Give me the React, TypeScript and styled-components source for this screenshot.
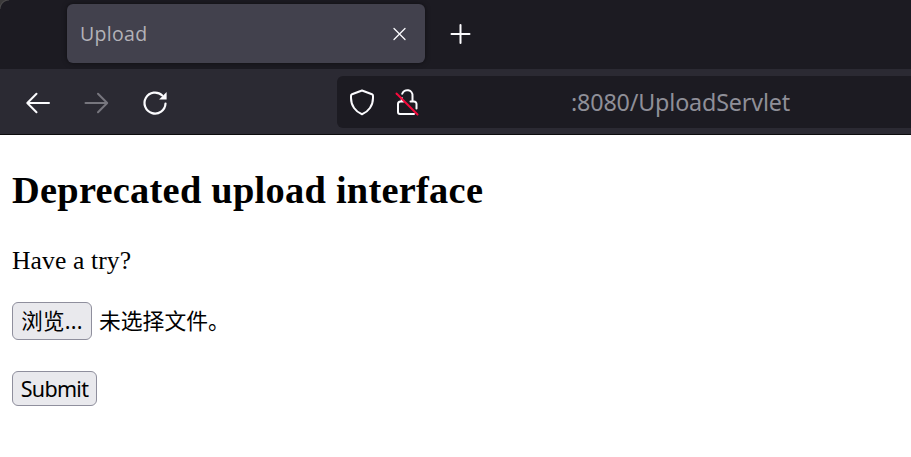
import React from "react";
import styled, { createGlobalStyle } from "styled-components";

const GlobalStyle = createGlobalStyle`
  html, body { margin: 0; padding: 0; background: #fff; }
  body { overflow: hidden; }
  * { box-sizing: border-box; }
`;

const Window = styled.div`
  width: 911px;
  height: 457px;
  display: flex;
  flex-direction: column;
  background: #fff;
`;

const TabStrip = styled.div`
  height: 69px;
  flex: none;
  display: flex;
  padding: 4px 0 0 67px;
  background: radial-gradient(circle at 9px 9px, #1c1b22 8px, #4c4b4c 9px, #3a393a 10px) 0 0 / 9px 9px no-repeat, #1c1b22;
`;

const Tab = styled.div`
  width: 358px;
  height: 59px;
  display: flex;
  align-items: center;
  justify-content: space-between;
  padding: 0 17px 0 13px;
  border-radius: 6px;
  background: #42414d;
  box-shadow: 0 0 5px rgba(0, 0, 0, 0.5);
`;

const TabTitle = styled.span`
  font: 19.5px/28px "Open Sans", "Noto Sans", sans-serif;
  letter-spacing: 0.3px;
  color: #b3b2b8;
  padding-top: 1px;
`;

const IconButton = styled.button<{ $size: number; $dim?: boolean }>`
  display: flex;
  flex: none;
  width: ${(p) => p.$size}px;
  height: ${(p) => p.$size}px;
  padding: 0;
  border: 0;
  background: none;
  color: ${(p) => (p.$dim ? "#77767e" : "#fbfbfe")};
`;

const NewTabSlot = styled.div`
  padding: 18px 0 0 23px;
`;

const Icon = styled.svg<{ $stroke?: number }>`
  width: 100%;
  height: 100%;
  fill: none;
  stroke: currentColor;
  stroke-width: ${(p) => p.$stroke ?? 2};
  stroke-linecap: round;
  stroke-linejoin: round;
`;

const Toolbar = styled.div`
  height: 66px;
  flex: none;
  display: flex;
  align-items: flex-start;
  padding-top: 7px;
  background: #2b2a33;
  border-bottom: 1px solid #0c0c0d;
`;

const Navigation = styled.div`
  width: 337px;
  height: 52px;
  display: flex;
  align-items: center;
  gap: 31px;
  padding: 1px 0 0 24px;
`;

const AddressBar = styled.div`
  flex: 1;
  height: 52px;
  display: flex;
  align-items: center;
  padding-left: 11px;
  border-radius: 6px 0 0 6px;
  background: #1c1b22;
`;

const SiteIcons = styled.div`
  width: 223px;
  display: flex;
  gap: 17px;
`;

const Address = styled.span`
  font: 23.3px/32px "Noto Sans", "Open Sans", sans-serif;
  letter-spacing: -0.16px;
  color: #8f8f98;
`;

const Page = styled.main`
  display: flex;
  flex-direction: column;
  align-items: flex-start;
  padding: 33px 12px 0;
  color: #000;
`;

const Heading = styled.h2`
  margin: 0;
  font: bold 38.4px/44px "Liberation Serif", "Times New Roman", serif;
  letter-spacing: 0.26px;
`;

const Paragraph = styled.p`
  margin: 34px 0 0;
  font: 25.6px/30px "Liberation Serif", "Times New Roman", serif;
  letter-spacing: 0.12px;
`;

const FileField = styled.div`
  display: flex;
  align-items: center;
  gap: 7px;
  margin-top: 26px;
`;

const FormButton = styled.button<{ $width: number; $height: number; $tracking: number }>`
  display: flex;
  align-items: center;
  justify-content: center;
  width: ${(p) => p.$width}px;
  height: ${(p) => p.$height}px;
  padding: 0;
  border: 1px solid #8f8f9d;
  border-radius: 6px;
  background: #e9e9ed;
  color: #000;
  font: 21.5px/30px "Noto Sans", "Noto Sans CJK SC", sans-serif;
  letter-spacing: ${(p) => p.$tracking}px;
  white-space: nowrap;
`;

const FileStatus = styled.span`
  font: 21.8px/30px "Noto Sans CJK SC", sans-serif;
  padding-bottom: 2px;
`;

const SubmitRow = styled.div`
  margin-top: 31px;
`;

export default function App() {
  return (
    <Window>
      <GlobalStyle />
      <TabStrip>
        <Tab>
          <TabTitle>Upload</TabTitle>
          <IconButton $size={17} aria-label="Close tab">
            <Icon viewBox="0 0 17 17" $stroke={1.3}>
              <path d="M3 3.500l11 11M14 3.500L3 14.500" />
            </Icon>
          </IconButton>
        </Tab>
        <NewTabSlot>
          <IconButton $size={24} aria-label="New tab">
            <Icon viewBox="0 0 24 24">
              <path d="M12.500 3v18M3.500 12h18" />
            </Icon>
          </IconButton>
        </NewTabSlot>
      </TabStrip>
      <Toolbar>
        <Navigation>
          <IconButton $size={28} aria-label="Back">
            <Icon viewBox="0 0 28 28">
              <path d="M25 14H3.500M12.500 4.800L3.300 14l9.200 9.200" />
            </Icon>
          </IconButton>
          <IconButton $size={28} $dim aria-label="Forward">
            <Icon viewBox="0 0 28 28">
              <path d="M2.500 14H24M15 4.800l9.200 9.200-9.200 9.200" />
            </Icon>
          </IconButton>
          <IconButton $size={28} aria-label="Reload">
            <Icon viewBox="0 0 28 28" $stroke={2.2}>
              <path d="M20.300 6.500A10.500 10.500 0 1 0 23.500 14.500" />
              <path d="M24.600 3v7.500h-7.500z" fill="currentColor" stroke="none" />
            </Icon>
          </IconButton>
        </Navigation>
        <AddressBar>
          <SiteIcons>
            <IconButton $size={28} aria-label="Tracking protection">
              <Icon viewBox="0 0 28 28">
                <path d="M14 2.500L24 6.300Q25 6.700 25 7.800V10C25 17.500 20.500 23.800 14 26.300C7.500 23.800 3 17.500 3 10V7.800Q3 6.700 4 6.300Z" />
              </Icon>
            </IconButton>
            <IconButton $size={28} aria-label="Connection is not secure">
              <Icon viewBox="0 0 28 28">
                <path d="M9.200 5.800a5.300 5.300 0 0 1 10.300 2.200v5.500M17.500 13.500h3.500a2.500 2.500 0 0 1 2.500 2.500v4.500M8.800 10v3.500M10.500 13.500H7.500A2.500 2.500 0 0 0 5 16v8A2 2 0 0 0 7 26h14" />
                <path d="M3.500 5.500L24.500 26.500" stroke="#f50a3c" />
              </Icon>
            </IconButton>
          </SiteIcons>
          <Address>:8080/UploadServlet</Address>
        </AddressBar>
      </Toolbar>
      <Page>
        <Heading>Deprecated upload interface</Heading>
        <Paragraph>Have a try?</Paragraph>
        <FileField>
          <FormButton $width={80} $height={38} $tracking={0.25}>浏览...</FormButton>
          <FileStatus>未选择文件。</FileStatus>
        </FileField>
        <SubmitRow>
          <FormButton $width={85} $height={35} $tracking={-0.7}>Submit</FormButton>
        </SubmitRow>
      </Page>
    </Window>
  );
}
